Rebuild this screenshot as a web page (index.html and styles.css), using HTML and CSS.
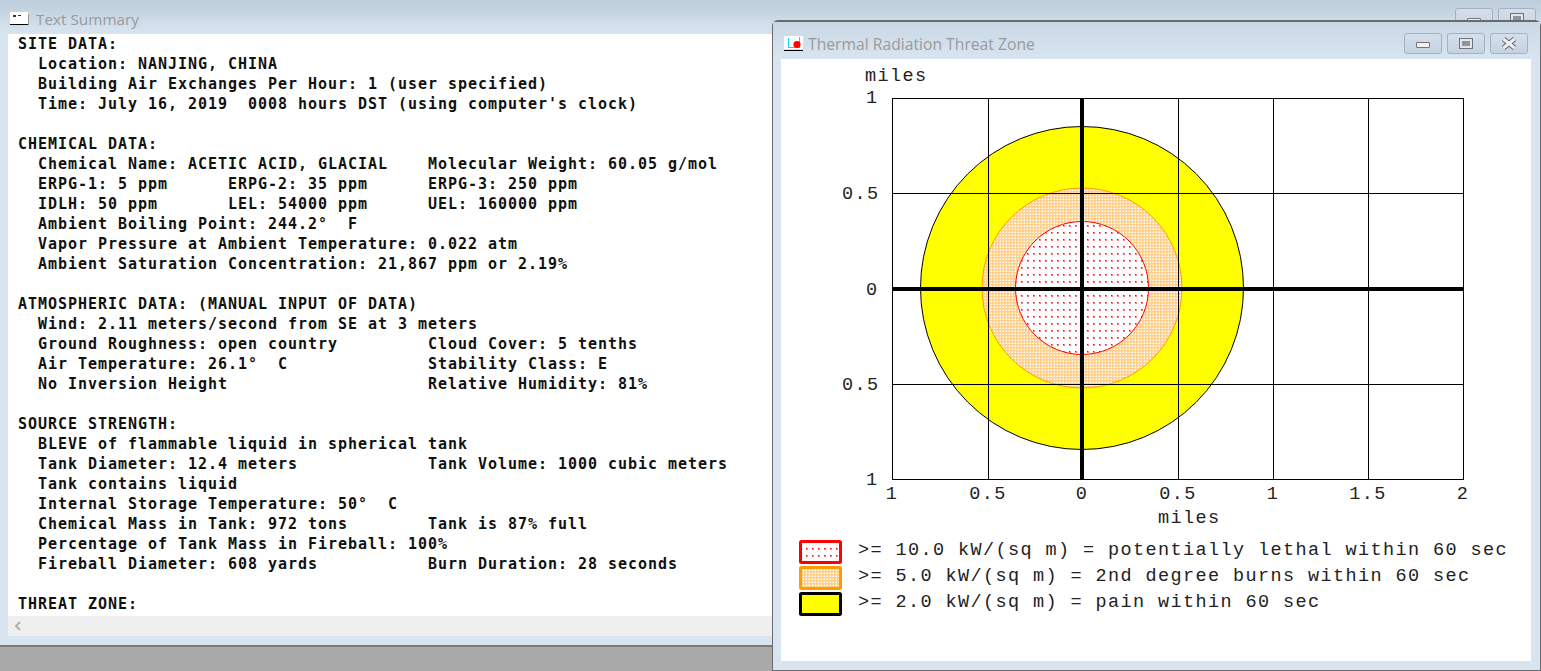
FILE: index.html
```html
<!DOCTYPE html>
<html lang="en">

<head>
    <meta charset="UTF-8">
    <meta name="viewport" content="width=device-width, initial-scale=1.0">
    <title>ALOHA</title>
    <link rel="stylesheet" href="styles.css">
</head>

<body>

    <div class="desktop">

        <!-- Text Summary window, sits behind -->
        <div class="window summary-window">
            <div class="title-bar summary-title">
                <svg class="title-icon" width="20" height="14" viewBox="0 0 20 14">
                    <rect x="0" y="0" width="18" height="12" fill="#fff" />
                    <rect x="3" y="3" width="3" height="2" fill="#333" />
                    <rect x="8" y="3" width="3" height="1" fill="#333" />
                    <rect x="0" y="12" width="18" height="1" fill="#000" />
                    <rect x="18" y="2" width="1" height="11" fill="#999" />
                </svg>
                <span class="title-text">Text Summary</span>
                <div class="title-buttons">
                    <span class="win-btn"><i class="glyph-min"></i></span>
                    <span class="win-btn"><i class="glyph-max"></i></span>
                </div>
            </div>
            <div class="summary-body">
<pre class="summary-text">SITE DATA:
  Location: NANJING, CHINA
  Building Air Exchanges Per Hour: 1 (user specified)
  Time: July 16, 2019  0008 hours DST (using computer's clock)

CHEMICAL DATA:
  Chemical Name: ACETIC ACID, GLACIAL    Molecular Weight: 60.05 g/mol
  ERPG-1: 5 ppm      ERPG-2: 35 ppm      ERPG-3: 250 ppm
  IDLH: 50 ppm       LEL: 54000 ppm      UEL: 160000 ppm
  Ambient Boiling Point: 244.2°  F
  Vapor Pressure at Ambient Temperature: 0.022 atm
  Ambient Saturation Concentration: 21,867 ppm or 2.19%

ATMOSPHERIC DATA: (MANUAL INPUT OF DATA)
  Wind: 2.11 meters/second from SE at 3 meters
  Ground Roughness: open country         Cloud Cover: 5 tenths
  Air Temperature: 26.1°  C              Stability Class: E
  No Inversion Height                    Relative Humidity: 81%

SOURCE STRENGTH:
  BLEVE of flammable liquid in spherical tank
  Tank Diameter: 12.4 meters             Tank Volume: 1000 cubic meters
  Tank contains liquid
  Internal Storage Temperature: 50°  C
  Chemical Mass in Tank: 972 tons        Tank is 87% full
  Percentage of Tank Mass in Fireball: 100%
  Fireball Diameter: 608 yards           Burn Duration: 28 seconds

THREAT ZONE:</pre>
            </div>
            <div class="h-scrollbar">
                <svg width="10" height="10" viewBox="0 0 10 10">
                    <path d="M7 1L3 5L7 9" fill="none" stroke="#b0b0b0" stroke-width="2" />
                </svg>
            </div>
        </div>

        <!-- Threat zone plot window -->
        <div class="window plot-window">
            <div class="title-bar plot-title">
                <svg class="title-icon" width="20" height="15" viewBox="0 0 20 15">
                    <rect x="0" y="0" width="19" height="13" fill="#fff" />
                    <rect x="4" y="2" width="1" height="10" fill="#22d3ee" />
                    <rect x="4" y="11" width="11" height="1" fill="#22d3ee" />
                    <rect x="15" y="1" width="1" height="11" fill="#ee66ee" />
                    <circle cx="13" cy="8.5" r="3.6" fill="#f00" />
                    <rect x="0" y="14" width="19" height="1" fill="#000" />
                </svg>
                <span class="title-text">Thermal Radiation Threat Zone</span>
                <div class="title-buttons">
                    <span class="win-btn"><i class="glyph-min"></i></span>
                    <span class="win-btn"><i class="glyph-max"></i></span>
                    <span class="win-btn">
                        <svg width="16" height="13" viewBox="0 0 16 13">
                            <path d="M2.5 2L13.5 11M13.5 2L2.5 11" fill="none" stroke="#5f6672" stroke-width="5" />
                            <path d="M2.5 2L13.5 11M13.5 2L2.5 11" fill="none" stroke="#efefef" stroke-width="3" />
                        </svg>
                    </span>
                </div>
            </div>
            <div class="plot-body">
                <svg class="plot" width="750" height="470" viewBox="781 59 750 470">
                    <defs>
                        <pattern id="dots-red" width="6" height="7" patternUnits="userSpaceOnUse">
                            <rect width="6" height="7" fill="#fff" />
                            <rect x="1" y="1" width="2" height="2" fill="#ff8080" />
                            <rect x="1" y="1" width="1" height="1" fill="#ff0000" />
                        </pattern>
                        <pattern id="dots-orange" width="3" height="3" patternUnits="userSpaceOnUse">
                            <rect width="3" height="3" fill="#ffd08c" />
                            <rect x="1" y="1" width="1" height="1" fill="#fff" />
                            <rect x="0" y="1" width="1" height="1" fill="#ffecd0" />
                            <rect x="1" y="0" width="1" height="1" fill="#ffecd0" />
                        </pattern>
                    </defs>

                    <circle cx="1082" cy="288" r="161.5" fill="#ff0" stroke="#000" />
                    <circle cx="1082" cy="288" r="100" fill="url(#dots-orange)" stroke="#ff9c00" />
                    <circle cx="1082" cy="288" r="66.5" fill="url(#dots-red)" stroke="#f00" />

                    <g class="grid">
                        <rect x="892.5" y="98.5" width="571" height="381" />
                        <path d="M988.5 98V479M1178.5 98V479M1273.5 98V479M1368.5 98V479" />
                        <path d="M892 193.5H1463M892 384.5H1463" />
                    </g>
                    <path class="axis" d="M1082 98V479M892 288.5H1463" />

                    <g class="axis-label">
                        <text x="865" y="81">miles</text>
                        <text x="866" y="103">1</text>
                        <text x="842" y="199">0.5</text>
                        <text x="866" y="295">0</text>
                        <text x="842" y="390">0.5</text>
                        <text x="866" y="485">1</text>
                        <text x="892" y="499" text-anchor="middle">1</text>
                        <text x="988" y="499" text-anchor="middle">0.5</text>
                        <text x="1082" y="499" text-anchor="middle">0</text>
                        <text x="1178" y="499" text-anchor="middle">0.5</text>
                        <text x="1273" y="499" text-anchor="middle">1</text>
                        <text x="1368" y="499" text-anchor="middle">1.5</text>
                        <text x="1463" y="499" text-anchor="middle">2</text>
                        <text x="1158" y="523">miles</text>
                    </g>
                </svg>

                <div class="legend">
                    <div class="legend-row">
                        <svg class="swatch" width="43" height="24" viewBox="0 0 43 24">
                            <rect x="1.5" y="1.5" width="40" height="21" rx="1" fill="url(#dots-red)" stroke="#f00" stroke-width="3" />
                        </svg>
                        <span>&gt;= 10.0 kW/(sq m) = potentially lethal within 60 sec</span>
                    </div>
                    <div class="legend-row">
                        <svg class="swatch" width="43" height="24" viewBox="0 0 43 24">
                            <rect x="1.5" y="1.5" width="40" height="21" rx="1" fill="url(#dots-orange)" stroke="#ff9c00" stroke-width="3" />
                        </svg>
                        <span>&gt;= 5.0 kW/(sq m) = 2nd degree burns within 60 sec</span>
                    </div>
                    <div class="legend-row">
                        <svg class="swatch" width="43" height="24" viewBox="0 0 43 24">
                            <rect x="1.5" y="1.5" width="40" height="21" rx="1" fill="#ff0" stroke="#000" stroke-width="3" />
                        </svg>
                        <span>&gt;= 2.0 kW/(sq m) = pain within 60 sec</span>
                    </div>
                </div>
            </div>
        </div>

    </div>

</body>

</html>
```

FILE: styles.css
```css
* {
    box-sizing: border-box;
}

html,
body {
    margin: 0;
    padding: 0;
    height: 100%;
    overflow: hidden;
}

.desktop {
    position: relative;
    width: 1541px;
    height: 671px;
    background: #a9a9a9;
    overflow: hidden;
}

.window {
    position: absolute;
    display: flex;
    flex-direction: column;
    background: #d8e5f1;
}

/* Text Summary window */
.summary-window {
    left: 0;
    top: 0;
    width: 1541px;
    height: 647px;
    padding: 0 0 9px 8px;
    border-bottom: 2px solid #7a7a7a;
}

.title-bar {
    display: flex;
    align-items: center;
    flex-shrink: 0;
    background: linear-gradient(180deg, #bdccda, #d8e5f1);
}

.summary-title {
    height: 34px;
    margin-left: -8px;
    padding: 4px 5px 0 10px;
}

.plot-title {
    height: 37px;
    margin: 0 -9px 0 -8px;
    padding: 5px 12px 0 11px;
    background: linear-gradient(180deg, #c9d7e4, #d8e5f1);
}

.title-icon {
    flex-shrink: 0;
}

.title-text {
    margin-left: 6px;
    font-family: "Open Sans", sans-serif;
    font-size: 15.3px;
    color: #9a9a9a;
}

.plot-title .title-text {
    margin-left: 4px;
    margin-top: 2px;
    font-size: 15.7px;
}

.title-buttons {
    display: flex;
    gap: 5px;
    margin-left: auto;
}

.win-btn {
    display: flex;
    align-items: center;
    justify-content: center;
    width: 38px;
    height: 21px;
    border: 1px solid #a3b1c4;
    border-radius: 3px;
    background: linear-gradient(180deg, #d5dfeb, #c5d2e1);
}

.glyph-min {
    width: 14px;
    height: 6px;
    border: 1px solid #6d7480;
    border-radius: 1px;
    margin-top: 4px;
    background: #f2f2f2;
}

.glyph-max {
    width: 12px;
    height: 9px;
    border: 2px solid #e4e4e4;
    outline: 1px solid #6d7480;
    background: #8d95a3;
}

.summary-title .title-buttons {
    align-self: flex-start;
    margin-top: 4px;
}

.summary-body {
    flex: 1;
    min-height: 0;
    padding-left: 10px;
    background: #fff;
    overflow: hidden;
}

.summary-text {
    margin: 0;
    font-family: "DejaVu Sans Mono", monospace;
    font-weight: bold;
    font-size: 15px;
    line-height: 20px;
    letter-spacing: 0.97px;
    color: #111;
}

.h-scrollbar {
    display: flex;
    align-items: center;
    flex-shrink: 0;
    height: 20px;
    padding-left: 5px;
    background: #efefef;
}

/* Plot window */
.plot-window {
    left: 772px;
    top: 20px;
    width: 769px;
    height: 651px;
    padding: 0 9px 9px 8px;
    border: 1px solid #6a6a6a;
    border-top-width: 2px;
    border-radius: 6px 6px 0 0;
}

.plot-body {
    flex: 1;
    display: flex;
    flex-direction: column;
    background: #fff;
}

.plot {
    display: block;
    flex-shrink: 0;
}

.grid {
    fill: none;
    stroke: #000;
    stroke-width: 1;
    shape-rendering: crispEdges;
}

.axis {
    fill: none;
    stroke: #000;
    stroke-width: 4;
    shape-rendering: crispEdges;
}

.axis-label {
    font-family: "Liberation Mono", monospace;
    font-size: 18.5px;
    letter-spacing: 1.4px;
    fill: #222;
}

.legend {
    display: flex;
    flex-direction: column;
    gap: 2px;
    padding: 11px 0 0 18px;
    font-family: "Liberation Mono", monospace;
    font-size: 18.5px;
    letter-spacing: 1.4px;
    color: #222;
    white-space: pre;
}

.legend-row {
    display: flex;
    align-items: center;
    gap: 16px;
    height: 24px;
}

.legend-row span {
    margin-top: -3px;
}

.swatch {
    flex-shrink: 0;
}
```
